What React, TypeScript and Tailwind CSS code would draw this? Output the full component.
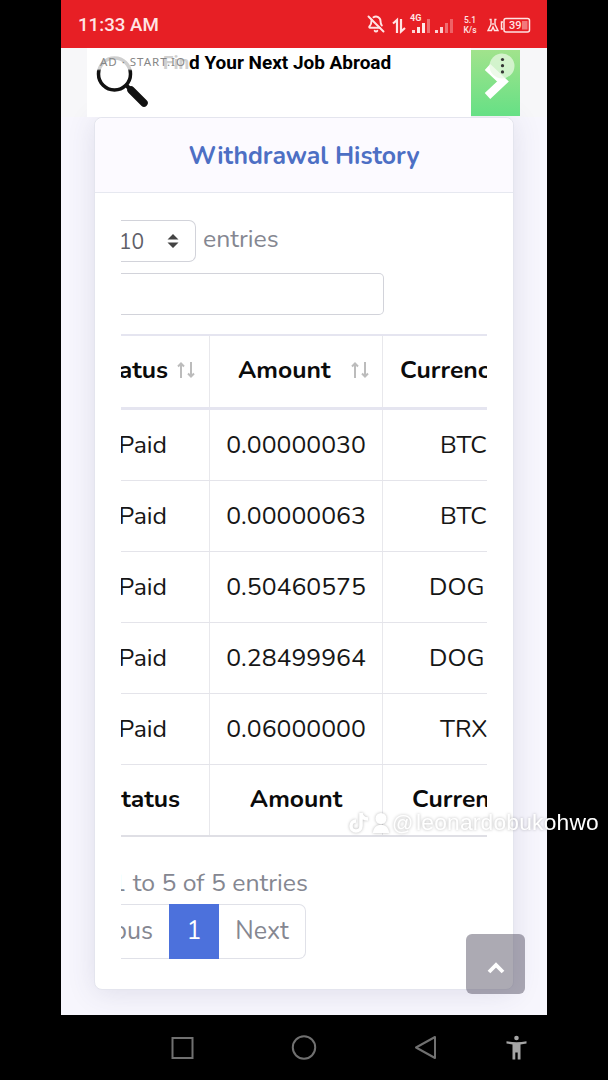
import { BellOff } from 'lucide-react'

const ROWS = [
  { status: 'Paid', amount: '0.00000030', currency: 'BTC' },
  { status: 'Paid', amount: '0.00000063', currency: 'BTC' },
  { status: 'Paid', amount: '0.50460575', currency: 'DOG' },
  { status: 'Paid', amount: '0.28499964', currency: 'DOG' },
  { status: 'Paid', amount: '0.06000000', currency: 'TRX' },
]

const CURRENCY_PAD: Record<string, string> = {
  BTC: 'pl-[57px]',
  DOG: 'pl-[46px]',
  TRX: 'pl-[57px]',
}

function Signal({ levels }: { levels: number[] }) {
  return (
    <svg width="20" height="16" viewBox="0 0 20 16" fill="#fff">
      {[3, 6, 10, 14].map((h, i) => (
        <rect key={h} x={i * 5} y={16 - h} width="3" height={h} opacity={levels[i]} />
      ))}
    </svg>
  )
}

function StatusBar() {
  return (
    <div className="flex h-[48px] items-center bg-[#e71f25] pr-[16px] pl-[17px] text-[#ffe4e4]">
      <span className="mt-[3px] font-['Roboto',sans-serif] text-[18.7px] font-medium">11:33 AM</span>
      <div className="mt-[2px] ml-auto flex h-[20px] items-center">
        <BellOff className="mb-[2px] h-[18px] w-[18px]" strokeWidth={2.6} />
        <svg className="ml-[7px]" width="14" height="17" viewBox="0 0 14 17" fill="none" stroke="currentColor" strokeWidth="2.2">
          <path d="M1 6.500 5 3V16M9 2V14.500L13 11" />
        </svg>
        <div className="relative ml-[6px] flex items-end gap-[3px]">
          <span className="absolute -top-[3px] -left-[2px] font-['Roboto',sans-serif] text-[9px] leading-[9px] font-bold">
            4G
          </span>
          <Signal levels={[0.8, 0.9, 0.9, 0.35]} />
          <Signal levels={[0.8, 0.8, 0.35, 0.3]} />
        </div>
        <div className="ml-[7px] flex w-[16px] flex-col items-center font-['Roboto',sans-serif] text-[8.5px] leading-[10px] font-medium">
          <span>5.1</span>
          <span>K/s</span>
        </div>
        <svg className="ml-[9px]" width="12" height="14" viewBox="0 0 12 14" fill="none" stroke="currentColor" strokeWidth="1.4">
          <path d="M2.500 1.500H4V6.500L1 12.500H4.500L6 9L7.500 12.500H11L8 6.500V1.500H9.500M6 5V7" />
        </svg>
        <svg className="ml-[1px]" width="31" height="17" viewBox="0 0 31 17" fill="none" stroke="currentColor">
          <path d="M3 5H1.500V12H3" strokeWidth="1.500" />
          <rect x="4" y="1.500" width="25.500" height="13.500" rx="2" strokeWidth="1.500" />
          <rect x="22" y="4" width="5.500" height="8.500" fill="currentColor" stroke="none" opacity=".45" />
          <text x="9" y="12.200" fill="currentColor" stroke="none" fontSize="11" fontFamily="Roboto" fontWeight="500">
            39
          </text>
        </svg>
      </div>
    </div>
  )
}

function AdBanner() {
  return (
    <div className="flex h-[69px] bg-[#f7f7f9] pr-[27px] pl-[26px]">
      <div className="relative flex flex-1 bg-white">
        <svg className="mt-[7px] ml-[8px] shrink-0" width="54" height="54" viewBox="0 0 54 54" fill="none">
          <defs>
            <linearGradient id="lens" x1="0" y1="0" x2="0" y2="1">
              <stop offset=".34" stopColor="#cfcfcf" />
              <stop offset=".4" stopColor="#111" />
            </linearGradient>
          </defs>
          <circle cx="19.500" cy="19" r="16" stroke="url(#lens)" strokeWidth="3.500" />
          <path d="M31 30 34 33" stroke="#111" strokeWidth="4" />
          <path d="M36 35 49 48" stroke="#111" strokeWidth="7.500" strokeLinecap="round" />
        </svg>
        <div className="mt-[4px] ml-[14px] font-['Roboto',sans-serif] text-[19px] leading-[22px] font-bold tracking-[-0.02px] whitespace-nowrap text-black">
          <span className="text-[#d0d0d0]">Fin</span>d Your Next Job Abroad
        </div>
        <div className="absolute top-[7px] left-[13px] font-['Noto_Sans',sans-serif] text-[11.5px] leading-[14px] tracking-[1px] whitespace-nowrap text-[#868686]">
          AD · START.IO
        </div>
      </div>
      <svg className="mt-[2px]" width="49" height="66" viewBox="0 0 49 66" fill="none">
        <defs>
          <linearGradient id="cta" x1="0" y1="0" x2="0" y2="1">
            <stop stopColor="#a1e38c" />
            <stop offset="1" stopColor="#66e085" />
          </linearGradient>
        </defs>
        <rect width="49" height="66" fill="url(#cta)" />
        <path d="M16.500 17 32 31.500 16.500 46" stroke="#fff" strokeWidth="8" />
        <circle cx="31" cy="16" r="12.500" fill="#e7f8e1" opacity=".75" />
        <g fill="#333">
          <circle cx="31.500" cy="9.500" r="1.600" />
          <circle cx="31.500" cy="15.700" r="1.600" />
          <circle cx="31.500" cy="21.900" r="1.600" />
        </g>
      </svg>
    </div>
  )
}

function SortIcon() {
  return (
    <svg className="-mt-[4px] shrink-0" width="20" height="18" viewBox="0 0 20 18" fill="none" stroke="#bcbcbc" strokeWidth="2">
      <path d="M5 17V3M2 5.500 5 2.500 8 5.500M15 1V15M12 12.500 15 15.500 18 12.500" />
    </svg>
  )
}

function HistoryTable() {
  return (
    <div className="mt-[19px] w-[366px] text-[24.8px] text-[#161616]">
      {/* Header */}
      <div className="flex h-[76px] border-t-2 border-b-[3px] border-[#e5e5f0] text-[24.7px] font-bold text-[#0b0b0b]">
        <div className="flex w-[89px] shrink-0 items-center justify-end overflow-hidden border-r border-[#e8e8ec] pr-[13px]">
          <span className="-mt-px mr-[8px]">Status</span>
          <SortIcon />
        </div>
        <div className="flex w-[173px] shrink-0 items-center border-r border-[#e8e8ec] pl-[28px]">
          <span className="-mt-px w-[112px]">Amount</span>
          <SortIcon />
        </div>
        <div className="-mt-px flex flex-1 items-center overflow-hidden pl-[17px]">Currency</div>
      </div>

      {ROWS.map((row) => (
        <div key={row.amount} className="flex h-[71px] border-b border-[#e4e4ea]">
          <div className="flex w-[89px] shrink-0 items-center justify-end border-r border-[#e8e8ec] pt-[2px] pr-[42px]">
            {row.status}
          </div>
          <div className="flex w-[173px] shrink-0 items-center justify-center border-r border-[#e8e8ec] pt-[2px]">
            {row.amount}
          </div>
          <div className={`flex w-[104px] items-center overflow-hidden pt-[2px] ${CURRENCY_PAD[row.currency]}`}>
            {row.currency}
          </div>
        </div>
      ))}

      {/* Footer */}
      <div className="flex h-[72px] border-b-2 border-[#dfdfe5] text-[24.7px] font-bold text-[#0b0b0b]">
        <div className="flex w-[89px] shrink-0 items-center justify-end overflow-hidden border-r border-[#e8e8ec] pr-[29px] pb-px">
          Status
        </div>
        <div className="flex w-[173px] shrink-0 items-center justify-center border-r border-[#e8e8ec] pb-px">
          Amount
        </div>
        <div className="flex flex-1 items-center overflow-hidden pb-px pl-[29px]">Currency</div>
      </div>
    </div>
  )
}

function HistoryCard() {
  return (
    <div className="mr-[33px] ml-[33px] h-[873px] rounded-[8px] border border-[#e4e5ee] bg-white font-['Nunito','Lato',sans-serif] shadow-[0_3px_28px_rgba(58,59,105,0.13)]">
      <div className="flex h-[75px] items-center justify-center rounded-t-[8px] border-b border-[#e6e8f0] bg-[#fcfaff] pt-[3px] text-[24.8px] font-bold text-[#4d6fc4]">
        Withdrawal History
      </div>
      <div className="ml-[26px] flex w-[366px] flex-col overflow-hidden pt-[27px] text-[#858791]">
        <div className="flex items-center">
          <div className="flex h-[42px] w-[75px] items-center rounded-r-[7px] border border-l-0 border-[#d2d3da] text-[21px] text-[#5f6068]">
            <span className="mt-[3px] -ml-[2px] w-[48px]">10</span>
            <svg width="12" height="14" viewBox="0 0 12 14" fill="#444">
              <path d="M6 0 11.500 5.500H.5ZM6 14 .5 8.500H11.500Z" />
            </svg>
          </div>
          <span className="-mt-[3px] ml-[7px] text-[24.8px]">entries</span>
        </div>
        <div className="mt-[11px] h-[42px] w-[263px] rounded-r-[5px] border border-l-0 border-[#d2d3da]" />
        <HistoryTable />
        <div className="mt-[26px] flex h-[40px] w-[187px] items-center justify-end pt-px text-[24.8px] whitespace-nowrap">
          Showing 1 to 5 of 5 entries
        </div>
        <div className="mt-px flex h-[55px] w-[185px] rounded-r-[7px] border border-l-0 border-[#e0e1e8] text-[25px]">
          <div className="flex w-[48px] items-center justify-end overflow-hidden pt-px pr-[16px]">Previous</div>
          <div className="-my-px flex w-[50px] items-center justify-center bg-[#4c71dc] pt-px text-white">1</div>
          <div className="flex flex-1 items-center justify-center pt-px">Next</div>
        </div>
      </div>
    </div>
  )
}

function NavBar() {
  return (
    <div className="flex h-[65px] bg-black">
      <svg width="486" height="65" viewBox="0 0 486 65" fill="none" stroke="#707070" strokeWidth="2">
        <rect x="111.500" y="23" width="20" height="20" />
        <circle cx="243" cy="32.500" r="11.200" />
        <path d="M355 32.500 374 22V43Z" strokeLinejoin="round" />
        <g fill="#a5a5a5" stroke="none">
          <circle cx="455.500" cy="23" r="2.300" />
          <path d="M445.500 26.200C452 27.500 459 27.500 465.500 26.200V28.500L459.500 29.500V44.500H456.700V37.500H454.300V44.500H451.500V29.500L445.500 28.500Z" />
        </g>
      </svg>
    </div>
  )
}

function Watermark() {
  return (
    <div className="absolute top-[808px] left-[349px] flex h-[29px] items-center font-['Liberation_Sans',Arial,sans-serif] text-white [filter:drop-shadow(0_0_1.5px_rgba(0,0,0,0.28))]">
      <svg width="20" height="21" viewBox="0 0 20 21" fill="none" stroke="currentColor" strokeWidth="3.500">
        <path d="M12 1V14A5 5 0 1 1 7 9M12 1C12.500 5 15 7 19 7" />
      </svg>
      <svg className="ml-[4px]" width="16" height="20" viewBox="0 0 16 20" fill="currentColor">
        <circle cx="8" cy="5.500" r="5.500" />
        <path d="M0 20C0 9 16 9 16 20Z" />
      </svg>
      <span className="ml-[3px] w-[24px] text-[21px]">@</span>
      <span className="text-[22.8px] tracking-[0.2px]">leonardobukohwo</span>
    </div>
  )
}

export default function App() {
  return (
    <div className="relative h-[1080px] w-[608px] overflow-hidden bg-black">
      <div className="mx-[61px] flex h-[1080px] flex-col">
        <StatusBar />
        <div className="relative h-[967px] overflow-hidden bg-[#f7f6fd]">
          <AdBanner />
          <HistoryCard />
          <button className="absolute top-[886px] left-[405px] flex h-[60px] w-[59px] items-center justify-center rounded-[6px] bg-[#5a5667]/50">
            <svg className="mt-[7px]" width="18" height="12" viewBox="0 0 18 12" fill="none" stroke="#fff" strokeWidth="3.800">
              <path d="M2 10 9 3 16 10" />
            </svg>
          </button>
        </div>
        <NavBar />
      </div>
      <Watermark />
    </div>
  )
}
